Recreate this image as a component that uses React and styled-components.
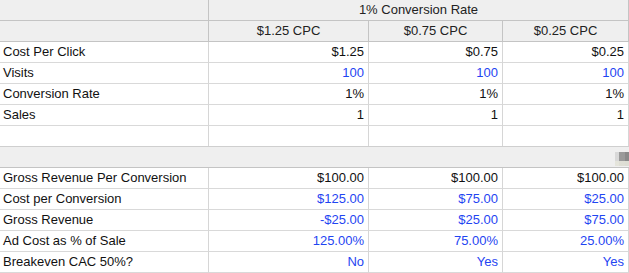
import React from 'react';
import styled, { createGlobalStyle } from 'styled-components';

const GlobalStyle = createGlobalStyle`
  html, body {
    margin: 0;
    padding: 0;
    background: #fff;
  }
  body {
    font-family: 'Liberation Sans', Arial, sans-serif;
    font-size: 13px;
    color: #111;
  }
`;

const BLUE = '#1f45f2';

const topRows = [
  { label: 'Cost Per Click', values: ['$1.25', '$0.75', '$0.25'] },
  { label: 'Visits', values: ['100', '100', '100'], blue: true },
  { label: 'Conversion Rate', values: ['1%', '1%', '1%'] },
  { label: 'Sales', values: ['1', '1', '1'] },
];

const bottomRows = [
  { label: 'Gross Revenue Per Conversion', values: ['$100.00', '$100.00', '$100.00'] },
  { label: 'Cost per Conversion', values: ['$125.00', '$75.00', '$25.00'], blue: true },
  { label: 'Gross Revenue', values: ['-$25.00', '$25.00', '$75.00'], blue: true },
  { label: 'Ad Cost as % of Sale', values: ['125.00%', '75.00%', '25.00%'], blue: true },
  { label: 'Breakeven CAC 50%?', values: ['No', 'Yes', 'Yes'], blue: true },
];

const Sheet = () => {
  const renderRow = (row) => (
    <React.Fragment key={row.label}>
      <Cell>{row.label}</Cell>
      {row.values.map((v, i) => (
        <Cell key={i} $align="right" $blue={row.blue}>
          {v}
        </Cell>
      ))}
    </React.Fragment>
  );

  return (
    <Grid>
      <HeadCell />
      <HeadCell $span={3} $align="center">1% Conversion Rate</HeadCell>
      <HeadCell />
      <HeadCell $align="center">$1.25 CPC</HeadCell>
      <HeadCell $align="center">$0.75 CPC</HeadCell>
      <HeadCell $align="center">$0.25 CPC</HeadCell>
      {topRows.map(renderRow)}
      <Cell />
      <Cell />
      <Cell />
      <Cell />
      <Divider>
        <Smudge />
      </Divider>
      {bottomRows.map(renderRow)}
    </Grid>
  );
};

const App = () => (
  <>
    <GlobalStyle />
    <Sheet />
  </>
);

const Grid = styled.div`
  display: grid;
  grid-template-columns: 209px 160px 134px 126px;
  grid-template-rows: 21px;
  grid-auto-rows: 21px;
  width: 629px;
`;

const Cell = styled.div`
  box-sizing: border-box;
  display: flex;
  align-items: center;
  justify-content: ${(p) =>
    p.$align === 'right' ? 'flex-end' : p.$align === 'center' ? 'center' : 'flex-start'};
  padding: 0 4px 0 3px;
  border-right: 1px solid #d6d6d6;
  border-bottom: 1px solid #d9d9d9;
  color: ${(p) => (p.$blue ? BLUE : '#111')};
  white-space: nowrap;
  overflow: hidden;
  line-height: 20px;
`;

const HeadCell = styled(Cell)`
  grid-column: span ${(p) => p.$span || 1};
  background: #efefef;
  border-right-color: #c4c4c4;
  border-bottom-color: #c4c4c4;
  color: #222;
  padding: 0 2px;
`;

const Divider = styled.div`
  grid-column: 1 / -1;
  box-sizing: border-box;
  display: flex;
  align-items: center;
  justify-content: flex-end;
  background: #efefef;
  border-top: 1px solid #cfcfcf;
  margin-top: -1px;
  height: 22px;
  border-bottom: 1px solid #c4c4c4;
`;

const Smudge = styled.div`
  width: 14px;
  height: 14px;
  margin-top: 4px;
  background: linear-gradient(
      to bottom,
      transparent 0 65%,
      rgba(230, 230, 220, 0.9) 65% 100%
    ),
    linear-gradient(to right, #d8d8d8 0 28%, #9a9a9a 28% 70%, #8a8a8a 70% 100%);
`;

export default App;
